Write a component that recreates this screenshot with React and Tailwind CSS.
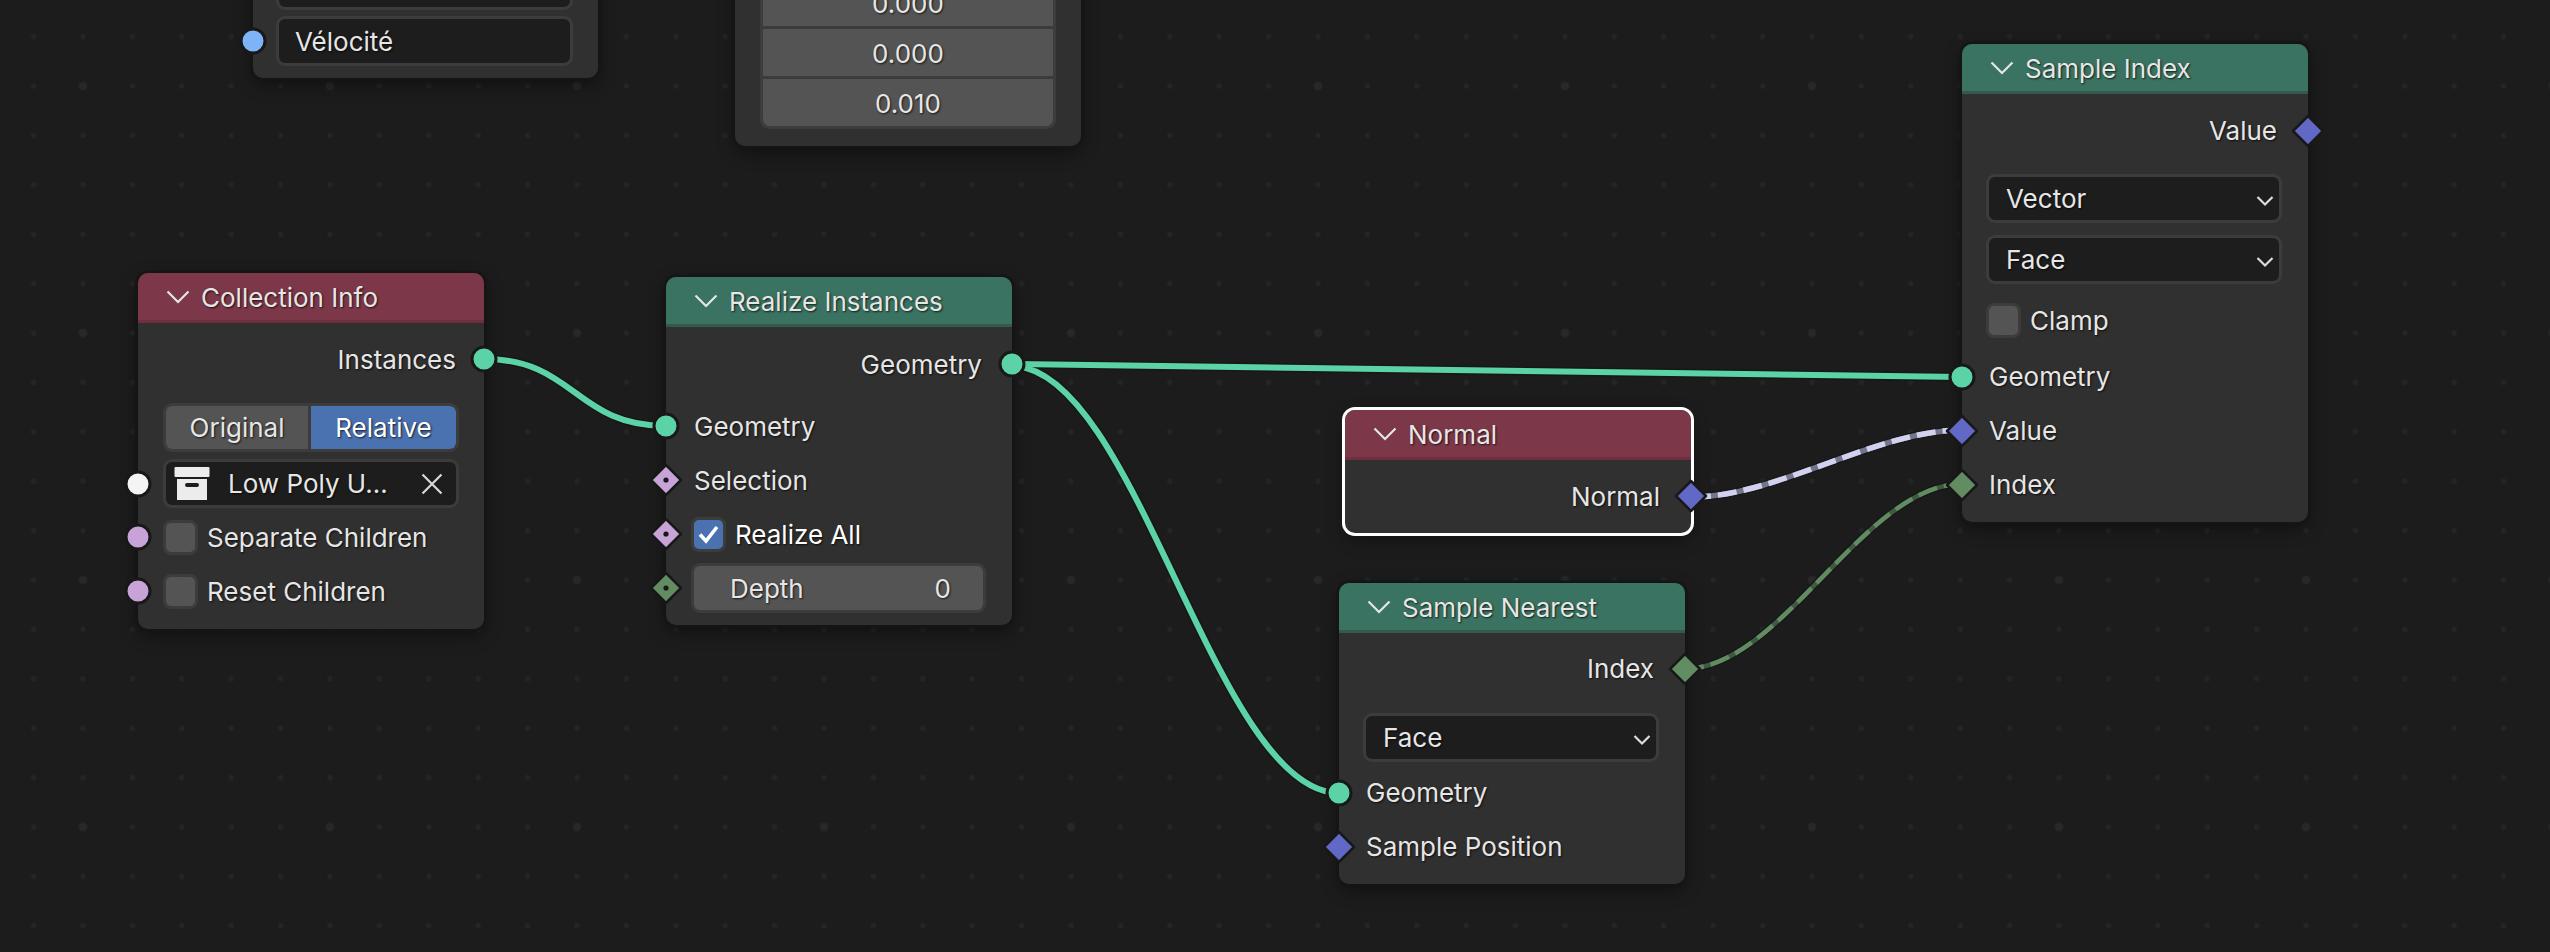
import React from "react";

const textCls = "[text-shadow:1px_1px_2px_rgba(0,0,0,0.75)] whitespace-nowrap";

function Socket({ type = "circle", color, dot = false, side = "left" }) {
  const pos = side === "left" ? "left-0 -translate-x-1/2" : "right-0 translate-x-1/2";
  if (type === "circle") {
    return (
      <span
        className={`absolute top-1/2 -translate-y-1/2 ${pos} z-10 w-[27px] h-[27px] rounded-full border-[3px] border-[#181818]`}
        style={{ backgroundColor: color }}
      />
    );
  }
  return (
    <svg
      className={`absolute top-1/2 -translate-y-1/2 ${pos} z-10 w-[34px] h-[34px]`}
      viewBox="0 0 34 34"
    >
      <path d="M17 2 L32 17 L17 32 L2 17 Z" fill={color} stroke="#181818" strokeWidth="2.5" strokeLinejoin="round" />
      {dot && <circle cx="17" cy="17" r="2.6" fill="#181818" />}
    </svg>
  );
}

function Row({ label, side = "left", socket, children, className = "" }) {
  return (
    <div
      className={`relative h-[54px] flex items-center shrink-0 pt-[2px] ${
        side === "right" ? "justify-end pr-[31px]" : "pl-[28px]"
      } ${className}`}
    >
      {socket && <Socket {...socket} side={side} />}
      {children}
      {label && <span className={`text-[#e6e6e6] ${textCls}`}>{label}</span>}
    </div>
  );
}

function Node({ title, tone, pos, selected, children }) {
  const head =
    tone === "red"
      ? "bg-[#7c3849] border-[#6f2f3f]"
      : "bg-[#3a7361] border-[#35594d]";
  return (
    <div
      className={`absolute ${pos} w-[346px] rounded-[10px] bg-[#303030] flex flex-col ${
        selected
          ? "shadow-[0_0_0_3px_#ffffff,0_6px_18px_rgba(0,0,0,0.4)]"
          : "shadow-[0_0_0_2.5px_#151515,0_6px_18px_rgba(0,0,0,0.45)]"
      }`}
    >
      <div className={`h-[50px] shrink-0 rounded-t-[10px] border-b-[3px] flex items-center ${head}`}>
        <svg className="ml-[28px] w-[24px] h-[14px]" viewBox="0 0 24 14" fill="none">
          <path d="M1.5 1.5 L12 12 L22.5 1.5" stroke="#e6e6e6" strokeWidth="2.2" />
        </svg>
        <span className={`ml-[11px] mt-[2px] text-[#e6e6e6] ${textCls}`}>{title}</span>
      </div>
      {children}
    </div>
  );
}

function Select({ label, className = "" }) {
  return (
    <div className={`h-[49px] rounded-[9px] border-[3px] border-[#3c3c3c] bg-[#1d1d1d] flex items-center justify-between pl-[17px] pr-[5px] ${className}`}>
      <span className={`text-[#e6e6e6] ${textCls}`}>{label}</span>
      <svg className="w-[18px] h-[12px] mt-[5px]" viewBox="0 0 18 12" fill="none">
        <path d="M1.5 2 L9 9.5 L16.5 2" stroke="#dcdcdc" strokeWidth="2.2" />
      </svg>
    </div>
  );
}

function Check({ checked }) {
  return (
    <span className={`w-[35px] h-[35px] -ml-[3px] -mt-[2px] mr-[9px] shrink-0 rounded-[8px] border-[3px] border-[#3c3c3c] flex items-center justify-center ${checked ? "bg-[#4a72b0]" : "bg-[#545454]"}`}>
      {checked && (
        <svg className="w-[25px] h-[25px]" viewBox="0 0 25 25" fill="none">
          <path d="M4 12.5 L10 19 L21 5" stroke="#ffffff" strokeWidth="3.6" />
        </svg>
      )}
    </span>
  );
}

function Wires() {
  const teal = "#5cd3a6";
  const w1 = "M484 359 C 575 359, 575 426, 666 426";
  const w2 = "M1012 364 L 1962 377";
  const w3 = "M1012 366 C 1136 366, 1215 793, 1339 793";
  const w4 = "M1692 497 C 1777 497, 1877 430, 1962 430";
  const w5 = "M1684 669 C 1782 669, 1864 484, 1962 484";
  return (
    <svg className="absolute inset-0 w-[2550px] h-[952px]" viewBox="0 0 2550 952" fill="none">
      <defs>
        <pattern id="minor" x="305.3" y="61.3" width="49.4" height="49.4" patternUnits="userSpaceOnUse">
          <circle cx="24.7" cy="24.7" r="2.6" fill="#252525" />
        </pattern>
        <pattern id="major" x="206.5" y="-37.5" width="247" height="247" patternUnits="userSpaceOnUse">
          <circle cx="123.5" cy="123.5" r="4.2" fill="#282828" />
        </pattern>
      </defs>
      <rect width="2550" height="952" fill="url(#minor)" />
      <rect width="2550" height="952" fill="url(#major)" />
      {[w1, w2, w3].map((d) => (
        <path key={d} d={d} stroke="#171717" strokeWidth="9" />
      ))}
      {[w1, w2, w3].map((d) => (
        <path key={d + "t"} d={d} stroke={teal} strokeWidth="6" />
      ))}
      <path d={w4} stroke="#171717" strokeWidth="8" />
      <path d={w4} stroke="#74748a" strokeWidth="5.5" />
      <path d={w4} stroke="#d2d2f0" strokeWidth="5.5" strokeDasharray="19 7" />
      <path d={w5} stroke="#171717" strokeWidth="7" />
      <path d={w5} stroke="#3f5a40" strokeWidth="4.5" />
      <path d={w5} stroke="#618b61" strokeWidth="4.5" strokeDasharray="20 7" />
    </svg>
  );
}

const PURPLE = "#c7a3d7";
const BLUE = "#6268c6";
const GREEN = "#628c62";
const GEO = "#5cd3a6";

export default function App() {
  return (
    <div className="relative w-[2550px] h-[952px] overflow-hidden bg-[#1c1c1c] text-[26px] text-[#e6e6e6] font-['Inter',sans-serif] leading-none">
      <Wires />

      {/* top-left partial node */}
      <div className="absolute left-[253px] top-[-60px] w-[345px] h-[138px] rounded-[10px] bg-[#303030] shadow-[0_0_0_2.5px_#151515,0_6px_18px_rgba(0,0,0,0.45)] flex flex-col justify-end gap-[6px] pb-[12px]">
        <div className="ml-[23px] mr-[25px] h-[49px] shrink-0 rounded-[9px] border-[3px] border-[#3c3c3c] bg-[#1d1d1d]" />
        <div className="relative h-[50px] shrink-0">
          <Socket type="circle" color="#7fb3f8" />
          <div className={`ml-[23px] mr-[25px] h-[50px] rounded-[9px] border-[3px] border-[#3c3c3c] bg-[#1d1d1d] flex items-center pl-[16px] pt-[2px] text-[#e6e6e6] ${textCls}`}>
            Vélocité
          </div>
        </div>
      </div>

      {/* top-middle partial node */}
      <div className="absolute left-[735px] top-[-60px] w-[346px] h-[206px] rounded-[10px] bg-[#303030] shadow-[0_0_0_2.5px_#151515,0_6px_18px_rgba(0,0,0,0.45)] flex flex-col justify-end pb-[17px]">
        <div className="mx-[25px] rounded-b-[9px] border-[3px] border-t-0 border-[#3c3c3c] bg-[#3c3c3c] flex flex-col gap-[3px]">
          {["0.000", "0.000", "0.010"].map((v, i) => (
            <div
              key={i}
              className={`h-[47px] bg-[#545454] flex items-center justify-center pt-[2px] text-[#e6e6e6] ${textCls} ${i === 2 ? "rounded-b-[7px]" : ""}`}
            >
              {v}
            </div>
          ))}
        </div>
      </div>

      {/* Collection Info */}
      <Node title="Collection Info" tone="red" pos="left-[138px] top-[273px]">
        <Row label="Instances" side="right" socket={{ type: "circle", color: GEO }} className="mt-[9px] !pr-[28px]" />
        <div className="mx-[25px] mt-[17px] h-[49px] rounded-[9px] border-[3px] border-[#3c3c3c] bg-[#3c3c3c] flex gap-[3px] overflow-hidden">
          <div className={`w-[142px] shrink-0 bg-[#545454] rounded-l-[6px] flex items-center justify-center text-[#e6e6e6] ${textCls}`}>Original</div>
          <div className={`flex-1 bg-[#4a72b0] rounded-r-[6px] flex items-center justify-center text-white ${textCls}`}>Relative</div>
        </div>
        <div className="relative mt-[7px] h-[49px]">
          <Socket type="circle" color="#f4f4f4" />
          <div className="mx-[25px] h-[49px] rounded-[9px] border-[3px] border-[#3c3c3c] bg-[#1d1d1d] flex items-center pl-[8px]">
            <svg className="w-[36px] h-[34px] shrink-0" viewBox="0 0 36 34" fill="#ececec">
              <rect x="0.5" y="0" width="35" height="10" rx="1" />
              <path fillRule="evenodd" d="M3 12 H33 V33 H3 Z M13 16 a2 2 0 0 0 0 4 H23 a2 2 0 0 0 0 -4 Z" />
            </svg>
            <span className={`ml-[18px] text-[#e6e6e6] ${textCls}`}>Low Poly U...</span>
            <svg className="ml-auto mr-[13px] w-[22px] h-[22px] shrink-0" viewBox="0 0 22 22" fill="none">
              <path d="M1.5 1.5 L20.5 20.5 M20.5 1.5 L1.5 20.5" stroke="#d8d8d8" strokeWidth="2.2" />
            </svg>
          </div>
        </div>
        <Row socket={{ type: "circle", color: PURPLE }} className="mt-[2px]">
          <Check />
          <span className={`text-[#e6e6e6] ${textCls}`}>Separate Children</span>
        </Row>
        <Row socket={{ type: "circle", color: PURPLE }} className="mb-[11px]">
          <Check />
          <span className={`text-[#e6e6e6] ${textCls}`}>Reset Children</span>
        </Row>
      </Node>

      {/* Realize Instances */}
      <Node title="Realize Instances" tone="green" pos="left-[666px] top-[277px]">
        <Row label="Geometry" side="right" socket={{ type: "circle", color: GEO }} className="mt-[10px] !pr-[30px]" />
        <Row label="Geometry" socket={{ type: "circle", color: GEO }} className="mt-[8px]" />
        <Row label="Selection" socket={{ type: "diamond", color: PURPLE, dot: true }} />
        <Row socket={{ type: "diamond", color: PURPLE, dot: true }}>
          <Check checked />
          <span className={`text-white ${textCls}`}>Realize All</span>
        </Row>
        <Row socket={{ type: "diamond", color: GREEN, dot: true }} className="mb-[10px] !pl-[25px] !pt-0">
          <div className={`w-[295px] h-[50px] rounded-[9px] border-[3px] border-[#3c3c3c] bg-[#545454] flex items-center justify-between pl-[36px] pr-[32px] pt-[1px] text-[#e6e6e6] ${textCls}`}>
            <span>Depth</span>
            <span>0</span>
          </div>
        </Row>
      </Node>

      {/* Sample Index */}
      <Node title="Sample Index" tone="green" pos="left-[1962px] top-[44px]">
        <Row label="Value" side="right" socket={{ type: "diamond", color: BLUE }} className="mt-[10px] !pt-0" />
        <Select label="Vector" className="ml-[24px] mr-[26px] mt-[16px]" />
        <Select label="Face" className="ml-[24px] mr-[26px] mt-[12px]" />
        <Row className="mt-[10px] !pl-[27px] !pt-0">
          <Check />
          <span className={`text-[#e6e6e6] ${textCls}`}>Clamp</span>
        </Row>
        <Row label="Geometry" socket={{ type: "circle", color: GEO }} className="mt-[2px] !pl-[27px] !pt-0" />
        <Row label="Value" socket={{ type: "diamond", color: BLUE }} className="!pl-[27px] !pt-0" />
        <Row label="Index" socket={{ type: "diamond", color: GREEN }} className="mb-[10px] !pl-[27px] !pt-0" />
      </Node>

      {/* Normal */}
      <Node title="Normal" tone="red" pos="left-[1345px] top-[410px]" selected>
        <Row label="Normal" side="right" socket={{ type: "diamond", color: BLUE }} className="mt-[9px] mb-[10px]" />
      </Node>

      {/* Sample Nearest */}
      <Node title="Sample Nearest" tone="green" pos="left-[1339px] top-[583px]">
        <Row label="Index" side="right" socket={{ type: "diamond", color: GREEN }} className="mt-[9px] !pt-0" />
        <Select label="Face" className="ml-[24px] mr-[26px] mt-[17px]" />
        <Row label="Geometry" socket={{ type: "circle", color: GEO }} className="mt-[4px] !pl-[27px] !pt-0" />
        <Row label="Sample Position" socket={{ type: "diamond", color: BLUE }} className="mb-[10px] !pl-[27px] !pt-0" />
      </Node>
    </div>
  );
}
